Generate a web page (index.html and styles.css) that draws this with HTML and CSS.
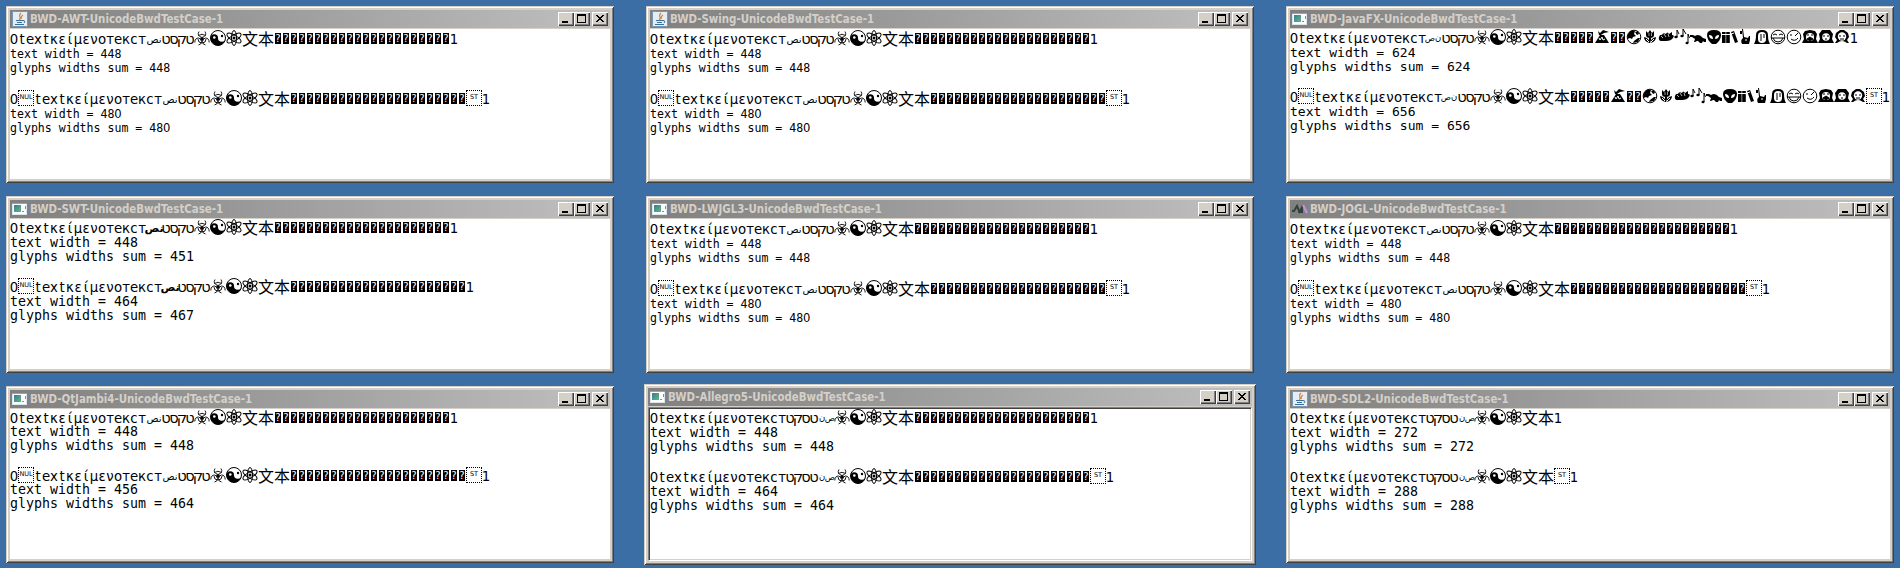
FILE: index.html
```html
<!DOCTYPE html>
<html lang="en">
<head>
<meta charset="utf-8">
<title>UnicodeBwdTestCase</title>
<link rel="stylesheet" href="styles.css">
</head>
<body>
<main class="desktop" id="desktop"></main>
<script src="app.js"></script>
</body>
</html>
```
FILE: styles.css
```css
* { box-sizing: border-box; }
body { margin: 0; background: #3a6ea5; overflow: hidden; }
.desktop {
  display: grid;
  grid-template-columns: repeat(3, 608px);
  grid-auto-rows: 177px;
  gap: 13px 32px;
  padding: 6px;
  width: 1900px;
  height: 568px;
}
.window {
  display: flex;
  flex-direction: column;
  padding: 4px;
  background: #d4d0c8;
  box-shadow: inset 1px 1px #d4d0c8, inset -1px -1px #404040, inset 2px 2px #fff, inset -2px -2px #808080;
}
.window.sunken { margin: -2px; }
.titlebar {
  display: flex;
  align-items: center;
  height: 18px;
  flex: none;
  margin-bottom: 1px;
  padding: 0 2px;
  background: linear-gradient(90deg, #808080, #c0c0c0);
}
.titlebar svg.app { width: 16px; height: 16px; flex: none; }
.title {
  flex: 1;
  margin-left: 2px;
  font: bold 11.4px/19px "DejaVu Sans Condensed", "DejaVu Sans", sans-serif;
  font-stretch: condensed;
  color: #d4d0c8;
  white-space: nowrap;
}
.btn {
  width: 16px;
  height: 14px;
  background: #d4d0c8;
  box-shadow: inset 1px 1px #fff, inset -1px -1px #404040, inset -2px -2px #808080;
}
.btn svg { display: block; width: 16px; height: 14px; }
.btn.close { margin-left: 2px; }
.client { flex: 1; background: #fff; color: #000; }
.sunken .client { border: 1px solid; border-color: #808080 #fff #fff #808080; box-shadow: inset 1px 1px #404040, inset -1px -1px #d4d0c8; padding: 1px; }
.glyphs { display: flex; height: 16px; font: 13.3px/19px "DejaVu Sans", sans-serif; }
.g { width: 8px; height: 16px; flex: none; display: flex; justify-content: center; white-space: nowrap; }
.g.wide { width: 16px; }
.g.cjk { font: 16px/16px "Noto Sans CJK SC", sans-serif; }
.g.heb { font: 14.5px/19px "DejaVu Sans", sans-serif; }
.g.rtl { font: 10px/19px "DejaVu Sans", sans-serif; }
.g.rtl.join { width: 16px; }
.g.heavy { font-weight: bold; font-size: 11px; }
.g.small { font-size: 8.5px; }
.g svg { width: 16px; height: 16px; }
.g.bad { padding: 3px 1px 2px; }
.g.bad span { width: 6px; height: 11px; background: #000; color: #fff; font: 10px/11px "DejaVu Sans", sans-serif; text-align: center; }
.g.ctl { border: 1px dotted #000; font: 6.5px/12px "DejaVu Sans", sans-serif; }
.info { font: 11.57px/14px "DejaVu Sans Mono", monospace; white-space: pre; }
.info div { height: 14px; position: relative; top: 1px; }
.zero { display: inline-block; width: .602em; font-family: "DejaVu Sans", sans-serif; text-indent: -.017em; line-height: 1; }
.block + .block { margin-top: 16px; }
.client.awt { padding-top: 1px; }
.fx .info { font-size: 13.04px; margin-top: -1px; }
.swt .info, .qt .info, .sdl .info { font-size: 13.29px; margin-top: -1px; }
.fx .info div, .swt .info div, .qt .info div { top: 2px; }
.qt .info { margin-top: -2px; }
.sdl .info { margin-top: 0; }
.sdl .block + .block { margin-top: 15px; }
```
FILE: app.js
```js
const svg = (body, cls = '', box = '0 0 16 16') => `<svg class="${cls}" viewBox="${box}">${body}</svg>`;

const appIcons = {
  java: svg('<rect x=".5" y=".5" width="15" height="15" rx="1" fill="#e4edf4" stroke="#7797b5"/><path d="M9 2C5 5 10 5 7.500 9M11 4C8 6 10 6 9 8" fill="none" stroke="#e77b20" stroke-width="1.200"/><path d="M4 9.500h7M5 11.500h5M3 13.500h9M11 9.500q3 0 1 2.500" fill="none" stroke="#3d6f9c"/>', 'app'),
  win: svg('<defs><linearGradient id="w" x2="1" y2="1"><stop stop-color="#397b9c"/><stop offset="1" stop-color="#62b87b"/></linearGradient></defs><rect x=".5" y="2.500" width="14" height="11" fill="#fff" stroke="#dde6ec"/><path d="M0 2.500h15" stroke="#8fa6b5"/><rect x="2" y="4" width="7" height="7" fill="url(#w)"/><path d="M10 10.500h2M13.500 5v3" stroke="#7094b0"/>', 'app'),
  jogl: svg('<path d="M0 10h2l3-5 3 7" fill="none" stroke="#31433f" stroke-width="2"/><path d="M6 12l4-8h1v8z" fill="#31433f"/><path d="M11 4l4 8" stroke="#c98ddb" stroke-width="2.200"/>', 'app')
};

const pictures = {
  bio: '<g fill="none" stroke="#000" stroke-width=".9"><path d="M5 1.500Q2.500 6 8 7.500 13.500 6 11 1.500"/><path d="M4.500 5.500q3.500-2.500 7 0"/><path d="M.8 12.500Q1 8 4.500 8q3 .5 3 3.500 0 3-3 3.500"/><path d="M15.200 12.500Q15 8 11.500 8q-3 .5-3 3.500 0 3 3 3.500"/><path d="M4 9q0 4 4 4t4-4"/></g><circle cx="8" cy="9" r="1.800"/>',
  yin: '<circle cx="8" cy="8" r="7.500" fill="#fff" stroke="#000"/><path d="M.5 8A3.750 3.750 0 018 8a3.750 3.750 0 007.500 0A7.500 7.500 0 01.5 8z"/><circle cx="4.300" cy="7.500" r="1.300" fill="#fff"/><circle cx="12" cy="6" r="1.200"/>',
  atom: '<g fill="none" stroke="#000"><ellipse cx="8" cy="8" rx="2.500" ry="7.500"/><ellipse cx="8" cy="8" rx="2.800" ry="8" transform="rotate(58 8 8)"/><ellipse cx="8" cy="8" rx="2.800" ry="8" transform="rotate(-58 8 8)"/></g><circle cx="8" cy="8" r="1.500"/>',
  volcano: '<path d="M1 14L6 6h4l5 8zM4 2l2 2 3-3 6 2-5 1-3 2H5z"/><path d="M5 9l1 2 2-3 1 3 2-1" fill="none" stroke="#fff"/>',
  earth: '<circle cx="8" cy="8" r="6.800" fill="#fff" stroke="#000"/><path d="M1.500 10Q1 3 6 1.500L9 2 8 5l2 2-3 1-1 2-2-1zM9 3l3-1 1 3-2 1zM12 9l2 0-2 4-5 1 1-2z"/>',
  tulip: '<path d="M4 2l2 2 2-3 2 3 2-2v4q0 3-4 3T4 6zM7 8h2v6H7zM2 8q5 1 6 6Q2 13 2 8zM14 8q-5 1-6 6 6-1 6-6z"/><path d="M7 4v3M9.500 4v3" stroke="#fff" stroke-width=".6"/><path d="M4 10l3 3M12 10l-3 3" stroke="#fff"/>',
  bug: '<path d="M1 8q1-3 3-2 1-3 4-1 1-3 3 0l3-2v3q3 0 1 3-2 3-7 3H4q-4 0-3-4z"/><path d="M3 7l2 2M6 5l2 3M10 5l1 3" stroke="#fff" stroke-width=".7"/>',
  notes: '<path d="M3 8V1l2 4M9 7V0l3 5M14 14V5l1.500 4" fill="none" stroke="#000"/><ellipse cx="2" cy="8" rx="1.700" ry="1.200"/><ellipse cx="8" cy="7" rx="1.700" ry="1.200"/><ellipse cx="13" cy="14" rx="1.500" ry="1.200"/>',
  turtle: '<path d="M0 6h3l2 1q4-3 8 2l3 1v3h-2l-1-1-1 2h-2l-2-2H7l-2 1H4l1-3-3-2H0z"/>',
  alien: '<path d="M1 6q0-5 7-5t7 5q0 5-5 9H6Q1 11 1 6z"/><path d="M3 6q4 0 4 4-4 0-4-4zM13 6q-4 0-4 4 4 0 4-4z" fill="#fff"/>',
  books: '<path d="M0 3h3.600v11H0zM4.200 3h3.600v11H4.200zM9 3l3-1 4 11-3 1z"/><path d="M0 5.500h8M9 5l3-1" stroke="#fff"/>',
  horn: '<path d="M4 0h1l1 8 4 1 1-2h1v4l-1 4H4q-2-4 1-6zM2 2h2v3H2z"/><path d="M7 11h2" stroke="#fff"/>',
  veil: '<path d="M0 15Q2 12 2 6q0-5 6-5t6 5q0 6 2 9z"/><rect x="4" y="3" width="8" height="11" rx="4" fill="#fff"/><path d="M7 5v7M10 5v4" stroke="#000"/>',
  smile: '<g fill="none" stroke="#000"><circle cx="8" cy="8" r="6.800"/><path d="M3 6l2-1 2 1M9 6l2-1 2 1M1 9h14M3 9q1 4 5 4t5-4"/></g>',
  wink: '<g fill="none" stroke="#000"><circle cx="8" cy="8" r="6.800"/><path d="M4 6h2M12 4l-3 3M5 10q4 3 7-1"/></g>',
  man: '<path d="M1 5l2-3 5-1 5 1 2 3-1 5 2 4H0l2-4z"/><circle cx="8" cy="8" r="4" fill="#fff"/><path d="M5 6h2M9 6h2M5 10l3-2 3 2-3 2z" stroke="#000"/>',
  girl: '<path d="M0 14l2-4-1-5 3-4h8l3 4-1 5 2 4z"/><circle cx="8" cy="8" r="3.800" fill="#fff"/><path d="M5 7h2M9 7h2M7 10h2" stroke="#000"/>',
  maid: '<path d="M1 14l2-3-2-3 1-4 4-3h4l4 3 1 4-2 3 2 3z"/><circle cx="8" cy="7.500" r="4.200" fill="#fff"/><path d="M3 14q5-4 10 0z" fill="#fff"/><path d="M5 7h2M9 7h2M6 10h4" stroke="#000"/>'
};

const cell = (text, cls = '') => `<span class="g ${cls}">${text}</span>`;
const chars = (s, cls = '') => [...s].map(c => cell(c, cls)).join('');
const pic = name => cell(svg(pictures[name]), 'wide');
const bad = n => cell('<span>?</span>', 'bad').repeat(n);
const ctl = s => cell(s, 'wide ctl');

// Right-to-left run, in the visual order each binding produces.
const hebrew = ['ט', 'ק', 'ס', 'ט'];
const reversed = chars([...hebrew].reverse(), 'heb');
const rtl = {
  joined: cell('نص', 'rtl join') + reversed,
  heavy: cell('نص', 'rtl join heavy') + reversed,
  split: cell('ص', 'rtl small') + cell('ن', 'rtl small') + reversed,
  logical: chars(hebrew, 'heb') + cell('ن', 'rtl small') + cell('ص', 'rtl small')
};

const emoji = bad(5) + pic('volcano') + bad(2) +
  ['earth', 'tulip', 'bug', 'notes', 'turtle', 'alien', 'books', 'horn', 'veil', 'smile', 'wink', 'man', 'girl', 'maid'].map(pic).join('');

const windows = [
  { name: 'AWT', icon: 'java', kind: 'awt', run: 'joined', w: [448, 448, 480, 480], nul: 1, st: 1 },
  { name: 'Swing', icon: 'java', kind: 'awt', run: 'joined', w: [448, 448, 480, 480], nul: 1, st: 1 },
  { name: 'JavaFX', icon: 'win', kind: 'fx', run: 'split', w: [624, 624, 656, 656], nul: 1, st: 1, tail: emoji },
  { name: 'SWT', icon: 'win', kind: 'swt', run: 'heavy', w: [448, 451, 464, 467], nul: 1 },
  { name: 'LWJGL3', icon: 'win', kind: 'awt', run: 'joined', w: [448, 448, 480, 480], nul: 1, st: 1 },
  { name: 'JOGL', icon: 'jogl', kind: 'awt', run: 'joined', w: [448, 448, 480, 480], nul: 1, st: 1 },
  { name: 'QtJambi4', icon: 'win', kind: 'qt', run: 'joined', w: [448, 448, 456, 464], nul: 1, st: 1 },
  { name: 'Allegro5', icon: 'win', kind: 'swt', run: 'logical', w: [448, 448, 464, 464], st: 1, frame: 'sunken' },
  { name: 'SDL2', icon: 'java', kind: 'sdl', run: 'logical', w: [272, 272, 288, 288], st: 1, tail: '' }
];

const line = (win, ctrl) => '<div class="glyphs">' + chars('0') + (ctrl && win.nul ? ctl('NUL') : '') +
  chars('textκείμενοтекст') + rtl[win.run] + pic('bio') + pic('yin') + pic('atom') +
  cell('文', 'wide cjk') + cell('本', 'wide cjk') + (win.tail ?? bad(22)) +
  (ctrl && win.st ? ctl('ST') : '') + chars('1') + '</div>';

const num = n => String(n).replace(/0/g, '<span class="zero">0</span>');
const block = (win, i) => `<div class="block">${line(win, i > 0)}<div class="info"><div>text width = ${num(win.w[i * 2])}</div><div>glyphs widths sum = ${num(win.w[i * 2 + 1])}</div></div></div>`;

const button = (d, cls = '') => `<div class="btn ${cls}">${svg(`<path d="${d}" fill-rule="evenodd" shape-rendering="crispEdges"/>`, '', '0 0 16 14')}</div>`;
const cross = 'M4 3h2v1h1v1h2V4h1V3h2v1h-1v1h-1v1H9v1h1v1h1v1h1v1h-2V9H9V8H7v1H6v1H4V9h1V8h1V7h1V6H6V5H5V4H4z';
const buttons = button('M4 9h6v2H4z') + button('M3 2h9v9H3zM4 4v6h7V4z') + button(cross, 'close');

document.getElementById('desktop').innerHTML = windows.map(win => `
  <section class="window ${win.frame || ''}">
    <header class="titlebar">${appIcons[win.icon]}<div class="title">BWD-${win.name}-UnicodeBwdTestCase-1</div>${buttons}</header>
    <div class="client ${win.kind}">${block(win, 0)}${block(win, 1)}</div>
  </section>`).join('');
```
